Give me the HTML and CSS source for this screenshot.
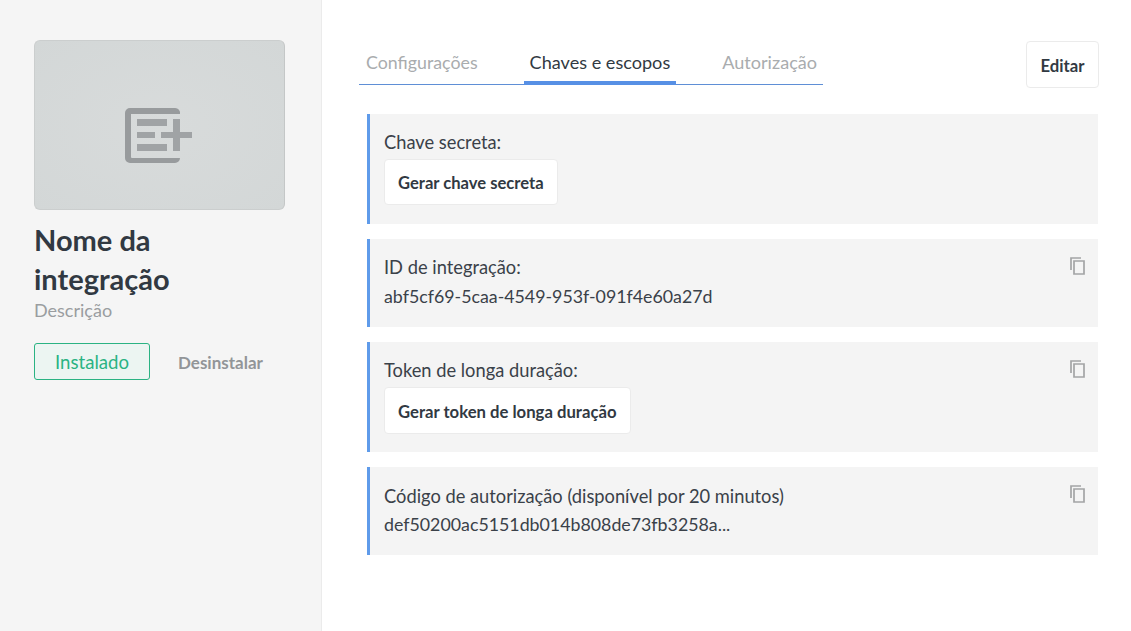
FILE: index.html
```html
<!DOCTYPE html>
<html lang="pt">
<head>
<meta charset="utf-8">
<title>Nome da integração</title>
<link rel="stylesheet" href="styles.css">
</head>
<body>
<div class="layout">
  <aside class="sidebar">
    <div class="cover">
      <svg class="cover-icon" viewBox="0 0 68 56" width="68" height="56" aria-hidden="true">
        <path d="M56 1H6a5 5 0 0 0-5 5v45a5 5 0 0 0 5 5h45a5 5 0 0 0 5-5h-48a1 1 0 0 1-1-1V7h49a5 5 0 0 0-5-6z" fill="#989b9d"/>
        <path d="M13 12h30v7H13zM13 25h18v6H13zM13 37h30v7H13zM37 25h12V12h7v13h12v6H56v13h-7V31H37z" fill="#a0a3a5"/>
      </svg>
    </div>
    <h1 class="name">Nome da integração</h1>
    <p class="description">Descrição</p>
    <div class="status-row">
      <span class="installed">Instalado</span>
      <span class="uninstall">Desinstalar</span>
    </div>
  </aside>
  <main class="content">
    <header class="topbar">
      <nav class="tabs">
        <a class="tab tab-first">Configurações</a>
        <a class="tab tab-active">Chaves e escopos</a>
        <a class="tab">Autorização</a>
      </nav>
      <button class="btn btn-edit">Editar</button>
    </header>
    <section class="panels">
      <div class="panel panel-tall">
        <div class="label">Chave secreta:</div>
        <button class="btn btn-short">Gerar chave secreta</button>
      </div>
      <div class="panel">
        <svg class="copy" viewBox="0 0 15 18" width="15" height="18" aria-hidden="true"><path d="M1 13V1h10M4 4h10v13H4z" fill="none" stroke="#a3a4a5" stroke-width="1.7"/></svg>
        <div class="label">ID de integração:</div>
        <div class="value">abf5cf69-5caa-4549-953f-091f4e60a27d</div>
      </div>
      <div class="panel panel-tall">
        <svg class="copy" viewBox="0 0 15 18" width="15" height="18" aria-hidden="true"><path d="M1 13V1h10M4 4h10v13H4z" fill="none" stroke="#a3a4a5" stroke-width="1.7"/></svg>
        <div class="label">Token de longa duração:</div>
        <button class="btn">Gerar token de longa duração</button>
      </div>
      <div class="panel">
        <svg class="copy" viewBox="0 0 15 18" width="15" height="18" aria-hidden="true"><path d="M1 13V1h10M4 4h10v13H4z" fill="none" stroke="#a3a4a5" stroke-width="1.7"/></svg>
        <div class="label label-code">Código de autorização (disponível por 20 minutos)</div>
        <div class="value">def50200ac5151db014b808de73fb3258a...</div>
      </div>
    </section>
  </main>
</div>
</body>
</html>
```
FILE: styles.css
```css
* { box-sizing: border-box; }
html, body { margin: 0; height: 100%; }
body {
  font-family: "Lato", "Noto Sans", sans-serif;
  font-size: 18px;
  color: #3a4149;
  background: #fff;
  overflow: hidden;
}
.layout { display: flex; height: 631px; }
.sidebar {
  width: 322px;
  flex: none;
  padding: 40px 36px 0 34px;
  background: #f5f5f5;
  border-right: 1px solid #ebebeb;
}
.cover {
  width: 251px;
  height: 170px;
  display: flex;
  align-items: center;
  justify-content: center;
  background: radial-gradient(ellipse at center, #d8dbdb 0%, #d3d7d7 100%);
  border: 1px solid #cbcece;
  border-right-color: #c4c7c7;
  border-radius: 6px;
}
.cover-icon { margin-top: 20px; margin-left: -3px; filter: blur(0.6px); }
.name {
  margin: 10px 0 0;
  font-size: 29px;
  line-height: 39px;
  font-weight: 700;
  color: #313942;
}
.description {
  margin: 1px 0 0;
  font-size: 18px;
  line-height: 23px;
  color: #9a9da0;
}
.status-row { display: flex; align-items: center; margin-top: 21px; gap: 28px; }
.installed {
  width: 116px;
  height: 37px;
  display: flex;
  align-items: center;
  justify-content: center;
  font-size: 18.6px;
  color: #2ab383;
  background: #ecf5f2;
  border: 1px solid #2ab383;
  border-radius: 3px;
}
.uninstall { font-size: 17px; font-weight: 700; color: #929598; padding-top: 1px; }
.content { flex: 1; padding: 41px 32px 0 37px; }
.topbar { display: flex; justify-content: space-between; align-items: flex-start; }
.tabs {
  display: flex;
  gap: 40px;
  width: 464px;
  height: 44px;
  padding-left: 1px;
  border-bottom: 1px solid #5f8fd6;
}
.tab {
  height: 44px;
  padding: 8px 6px 0;
  line-height: 26px;
  font-size: 18.1px;
  color: #a9acae;
  white-space: nowrap;
}
.tab-first { font-size: 17.8px; }
.tab-active { color: #313942; border-bottom: 4px solid #5790e5; }
.btn {
  display: block;
  font: 700 16.7px/24px "Lato", "Noto Sans", sans-serif;
  color: #313942;
  background: #fff;
  border: 1px solid #ebebeb;
  border-radius: 4px;
  height: 47px;
  padding: 2px 13px 0;
}
.btn-edit { width: 73px; padding: 2px 0 0; }
.btn-short { height: 46px; padding: 1px 13px 0; font-size: 16.6px; }
.panels {
  display: flex;
  flex-direction: column;
  gap: 15px;
  margin: -14px 1px 0 8px;
  padding-top: 40px;
}
.panel {
  position: relative;
  height: 88px;
  padding: 14px 14px 0;
  background: #f4f4f4;
  border-left: 3px solid #5f9bea;
}
.panel-tall { height: 110px; }
.panel-tall .btn { margin-top: 2px; }
.label, .value { line-height: 29px; white-space: nowrap; }
.label { font-size: 18.3px; }
.label-code { padding-top: 1px; margin-bottom: -1px; }
.value { font-size: 17.8px; }
.copy { position: absolute; top: 18px; right: 13px; }
```
